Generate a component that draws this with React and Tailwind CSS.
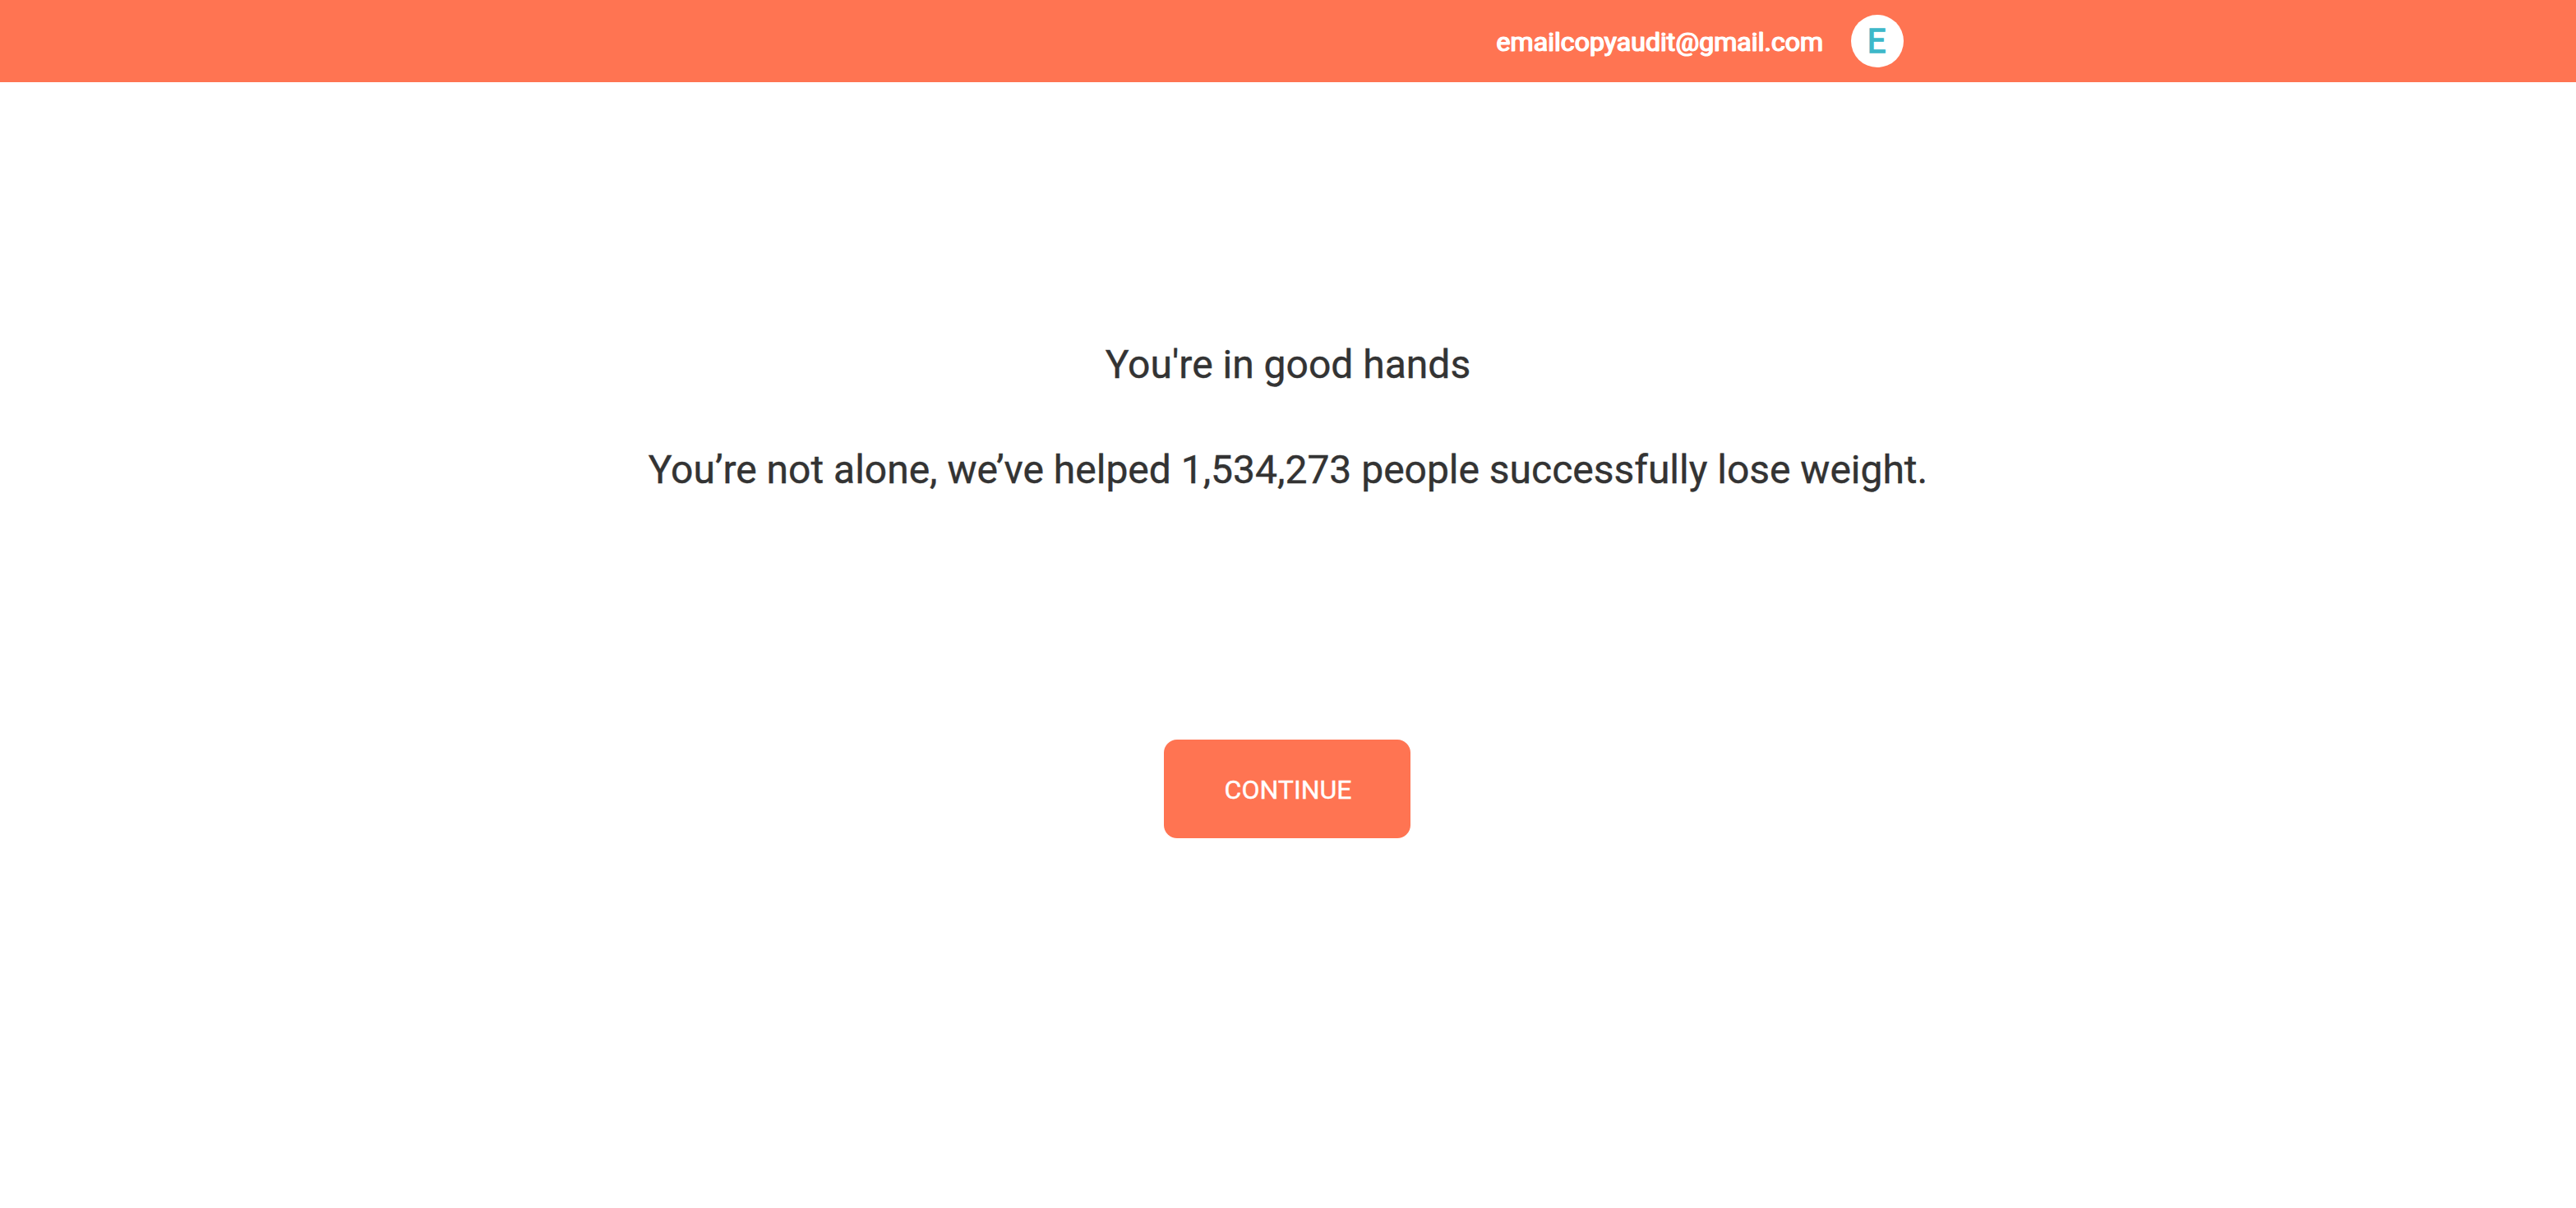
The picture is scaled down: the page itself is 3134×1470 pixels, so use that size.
import React from 'react'

const USER = { email: 'emailcopyaudit@gmail.com' }
const MEMBERS_HELPED = 1534273

export default function App() {
  return (
    <div className="min-h-[1470px] bg-white font-[Roboto,sans-serif] text-[#333]">
      <Header user={USER} />

      <main className="flex flex-col items-center pt-[308px]">
        <h1 className="text-[48px] leading-[72px] [-webkit-text-stroke:0.4px]">You're in good hands</h1>
        <p className="mt-14 text-[48px] leading-[72px] tracking-[-0.015px] [-webkit-text-stroke:0.4px]">
          {`You’re not alone, we’ve helped ${MEMBERS_HELPED.toLocaleString('en-US')} people successfully lose weight.`}
        </p>
        <button
          type="button"
          className="mt-[292px] mr-0.5 h-[120px] w-[300px] rounded-2xl bg-[#ff7452] pt-px pl-0.5 text-[32px] text-white [-webkit-text-stroke:0.4px]"
        >
          CONTINUE
        </button>
      </main>
    </div>
  )
}

// ── Header ─────────────────────────────────────────────────────────────────────

function Header({ user }) {
  return (
    <header className="flex h-[100px] items-center justify-center bg-[#ff7452]">
      <div className="flex w-[1498px] items-center justify-end gap-[34px]">
        <span className="pt-0.5 text-[32px] tracking-[0.06px] text-white [-webkit-text-stroke:1.1px] [text-shadow:1px_0_0_#fff]">
          {user.email}
        </span>
        <Avatar name={user.email} />
      </div>
    </header>
  )
}

function Avatar({ name }) {
  return (
    <div className="flex size-16 items-center justify-center rounded-full bg-white pt-px pr-0.5 text-[40px] text-[#3db8c9] [-webkit-text-stroke:1.4px]">
      {name[0].toUpperCase()}
    </div>
  )
}
